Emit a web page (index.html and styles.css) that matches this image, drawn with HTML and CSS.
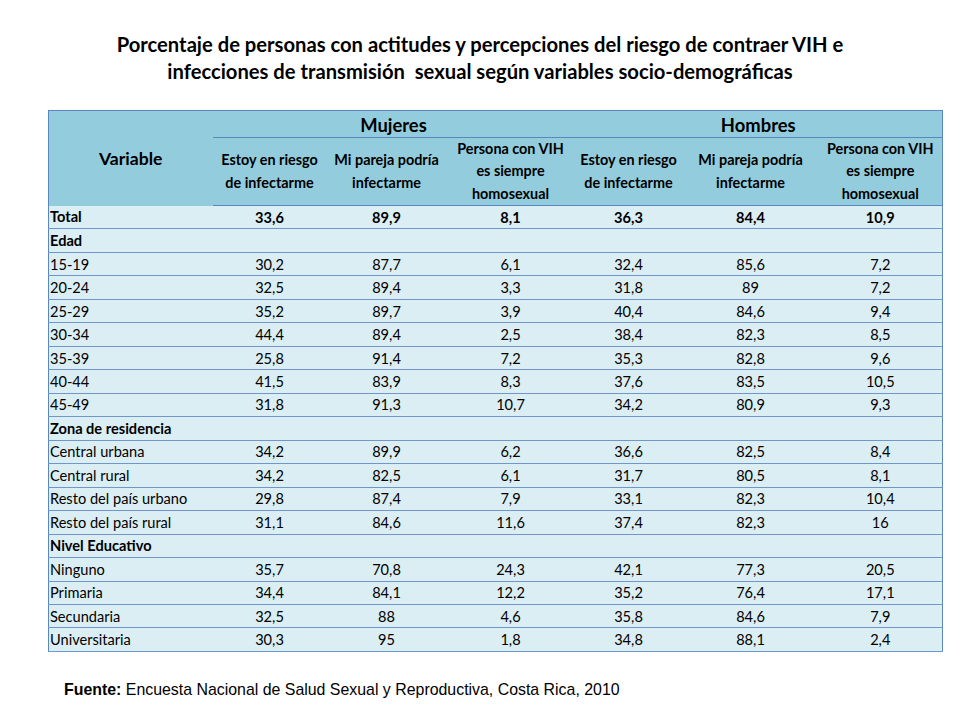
FILE: index.html
```html
<!DOCTYPE html>
<html lang="es">
<head>
<meta charset="utf-8">
<title>Actitudes y percepciones del riesgo</title>
<link rel="stylesheet" href="styles.css">
</head>
<body>
<h1 class="title">Porcentaje de personas con actitudes y percepciones del riesgo de contraer VIH e<br>infecciones de transmisión&nbsp; sexual según variables socio-demográficas</h1>
<table class="data">
  <colgroup>
    <col class="c-var"><col class="c1"><col class="c2"><col class="c3"><col class="c4"><col class="c5"><col class="c6">
  </colgroup>
  <thead>
    <tr class="h1">
      <th rowspan="2" class="var-h">Variable</th>
      <th colspan="3" class="group">Mujeres</th>
      <th colspan="3" class="group">Hombres</th>
    </tr>
    <tr class="h2">
      <th>Estoy en riesgo<br>de infectarme</th>
      <th>Mi pareja podría<br>infectarme</th>
      <th>Persona con VIH<br>es siempre<br>homosexual</th>
      <th>Estoy en riesgo<br>de infectarme</th>
      <th>Mi pareja podría<br>infectarme</th>
      <th>Persona con VIH<br>es siempre<br>homosexual</th>
    </tr>
  </thead>
  <tbody>
    <tr class="bold"><td>Total</td><td>33,6</td><td>89,9</td><td>8,1</td><td>36,3</td><td>84,4</td><td>10,9</td></tr>
    <tr class="bold"><td>Edad</td><td></td><td></td><td></td><td></td><td></td><td></td></tr>
    <tr><td>15-19</td><td>30,2</td><td>87,7</td><td>6,1</td><td>32,4</td><td>85,6</td><td>7,2</td></tr>
    <tr><td>20-24</td><td>32,5</td><td>89,4</td><td>3,3</td><td>31,8</td><td>89</td><td>7,2</td></tr>
    <tr><td>25-29</td><td>35,2</td><td>89,7</td><td>3,9</td><td>40,4</td><td>84,6</td><td>9,4</td></tr>
    <tr><td>30-34</td><td>44,4</td><td>89,4</td><td>2,5</td><td>38,4</td><td>82,3</td><td>8,5</td></tr>
    <tr><td>35-39</td><td>25,8</td><td>91,4</td><td>7,2</td><td>35,3</td><td>82,8</td><td>9,6</td></tr>
    <tr><td>40-44</td><td>41,5</td><td>83,9</td><td>8,3</td><td>37,6</td><td>83,5</td><td>10,5</td></tr>
    <tr><td>45-49</td><td>31,8</td><td>91,3</td><td>10,7</td><td>34,2</td><td>80,9</td><td>9,3</td></tr>
    <tr class="bold"><td>Zona de residencia</td><td></td><td></td><td></td><td></td><td></td><td></td></tr>
    <tr><td>Central urbana</td><td>34,2</td><td>89,9</td><td>6,2</td><td>36,6</td><td>82,5</td><td>8,4</td></tr>
    <tr><td>Central rural</td><td>34,2</td><td>82,5</td><td>6,1</td><td>31,7</td><td>80,5</td><td>8,1</td></tr>
    <tr><td>Resto del país urbano</td><td>29,8</td><td>87,4</td><td>7,9</td><td>33,1</td><td>82,3</td><td>10,4</td></tr>
    <tr><td>Resto del país rural</td><td>31,1</td><td>84,6</td><td>11,6</td><td>37,4</td><td>82,3</td><td>16</td></tr>
    <tr class="bold"><td>Nivel Educativo</td><td></td><td></td><td></td><td></td><td></td><td></td></tr>
    <tr><td>Ninguno</td><td>35,7</td><td>70,8</td><td>24,3</td><td>42,1</td><td>77,3</td><td>20,5</td></tr>
    <tr><td>Primaria</td><td>34,4</td><td>84,1</td><td>12,2</td><td>35,2</td><td>76,4</td><td>17,1</td></tr>
    <tr><td>Secundaria</td><td>32,5</td><td>88</td><td>4,6</td><td>35,8</td><td>84,6</td><td>7,9</td></tr>
    <tr><td>Universitaria</td><td>30,3</td><td>95</td><td>1,8</td><td>34,8</td><td>88,1</td><td>2,4</td></tr>
  </tbody>
</table>
<p class="source"><b>Fuente:</b> Encuesta Nacional de Salud Sexual y Reproductiva, Costa Rica, 2010</p>
</body>
</html>
```
FILE: styles.css
```css
html, body {
  margin: 0;
  padding: 0;
  background: #ffffff;
}
body {
  width: 960px;
  height: 720px;
  overflow: hidden;
  font-family: Lato, "Noto Sans", sans-serif;
  color: #000;
}
.title {
  margin: 0;
  padding-top: 31px;
  font-size: 20.2px;
  line-height: 27px;
  font-weight: 700;
  text-align: center;
}
.data {
  margin: 25px 0 0 48px;
  width: 894px;
  border-collapse: collapse;
  table-layout: fixed;
  font-size: 14.6px;
  border: 1px solid #5b87c0;
}
.c-var { width: 164px; }
.c1 { width: 114px; }
.c2 { width: 120px; }
.c3 { width: 128px; }
.c4 { width: 108px; }
.c5 { width: 136px; }
.c6 { width: 124px; }
thead th {
  background: #93cddd;
  font-weight: 700;
  padding: 0 1px;
  white-space: nowrap;
}
.h1 { height: 27px; }
.h1 .group {
  font-size: 18.4px;
  border-bottom: 1px solid #5b87c0;
  padding-top: 1px;
}
.var-h {
  font-size: 17.6px;
  text-align: center;
}
.h2 { height: 68px; }
.h2 th {
  font-size: 14.4px;
  line-height: 22.3px;
  border-bottom: 1px solid #5b87c0;
}
tbody tr { height: 23.47px; }
tbody td {
  background: #dbeef4;
  border-bottom: 1.5px solid #7097c9;
  text-align: center;
  padding: 0 2px;
  white-space: nowrap;
}
tbody td:first-child {
  text-align: left;
  padding-left: 1px;
}
tbody tr.bold td { font-weight: 700; }
.source {
  margin: 29px 0 0 64px;
  font-family: "Liberation Sans", Arial, sans-serif;
  font-size: 15.9px;
  color: #000;
}
```
